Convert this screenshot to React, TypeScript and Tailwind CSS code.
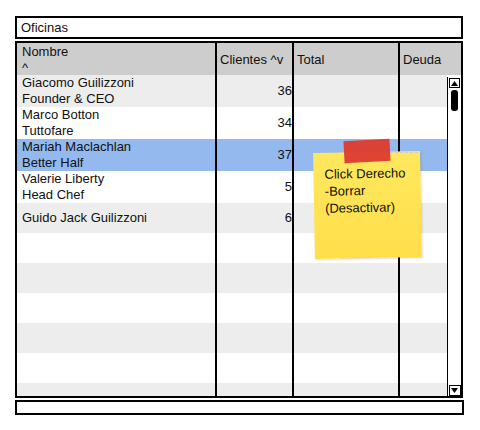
import React from "react";

type Row = { l1: string; l2?: string; n: string; h: number; bg: string };

const rows: Row[] = [
  { l1: "Giacomo Guilizzoni", l2: "Founder & CEO", n: "36", h: 32, bg: "bg-[#ededed]" },
  { l1: "Marco Botton", l2: "Tuttofare", n: "34", h: 32, bg: "bg-white" },
  { l1: "Mariah Maclachlan", l2: "Better Half", n: "37", h: 32, bg: "bg-[#93b9ee]" },
  { l1: "Valerie Liberty", l2: "Head Chef", n: "5", h: 32, bg: "bg-white" },
  { l1: "Guido Jack Guilizzoni", n: "6", h: 30, bg: "bg-[#ededed]" },
  { l1: "", n: "", h: 30, bg: "bg-white" },
  { l1: "", n: "", h: 30, bg: "bg-[#ededed]" },
  { l1: "", n: "", h: 30, bg: "bg-white" },
  { l1: "", n: "", h: 30, bg: "bg-[#ededed]" },
  { l1: "", n: "", h: 30, bg: "bg-white" },
  { l1: "", n: "", h: 30, bg: "bg-[#ededed]" },
];

export default function App() {
  return (
    <div
      className="relative w-[480px] h-[430px] bg-white text-[13px] leading-[16px] text-[#111]"
      style={{ fontFamily: '"Liberation Sans", Arial, sans-serif' }}
    >
      <div className="pl-[15px] pt-[16px] flex flex-col gap-[2px]">
        {/* Title box */}
        <div className="w-[448px] h-[23px] border-2 border-black flex items-center px-[4px]">
          Oficinas
        </div>

        {/* Grid */}
        <div className="w-[448px] h-[357px] border-2 border-black overflow-hidden flex flex-col">
          {/* Header */}
          <div className="flex h-[32px] bg-[#cdcdcd] shrink-0">
            <div className="w-[200px] border-r-2 border-black pl-[5px] pt-[1px] flex flex-col">
              <span>Nombre</span>
              <span>^</span>
            </div>
            <div className="w-[77px] border-r-2 border-black pl-[3px] flex items-center pt-[2px]">
              Clientes ^v
            </div>
            <div className="w-[106px] border-r-2 border-black pl-[3px] flex items-center pt-[2px]">
              Total
            </div>
            <div className="flex-1 pl-[3px] flex items-center pt-[2px]">Deuda</div>
          </div>

          {/* Body */}
          <div className="flex flex-1 min-h-0">
            <div className="w-[430px] flex flex-col">
              {rows.map((r, i) => (
                <div key={i} className={`flex shrink-0 ${r.bg}`} style={{ height: r.h }}>
                  <div className="w-[200px] border-r-2 border-black pl-[5px] flex flex-col justify-center">
                    <span>{r.l1}</span>
                    {r.l2 && <span>{r.l2}</span>}
                  </div>
                  <div className="w-[77px] border-r-2 border-black flex items-center justify-end pr-[0px]">
                    {r.n}
                  </div>
                  <div className="w-[106px] border-r-2 border-black" />
                  <div className="flex-1" />
                </div>
              ))}
            </div>
            {/* Scrollbar */}
            <div className="w-[14px] pt-[2px] flex flex-col">
              <div className="flex-1 border-l-[1.5px] border-black bg-white flex flex-col items-center pt-[1px] pb-[0px]">
                <div className="w-[11px] h-[10px] border border-black flex items-center justify-center">
                  <svg width="7" height="5" viewBox="0 0 7 5">
                    <polygon points="0,5 7,5 3.5,0" fill="#000" />
                  </svg>
                </div>
                <div className="mt-[2px] w-[7px] h-[21px] rounded-[3px] bg-black" />
                <div className="flex-1" />
                <div className="w-[12px] h-[11px] border border-black flex items-center justify-center">
                  <svg width="7" height="5" viewBox="0 0 7 5">
                    <polygon points="0,0 7,0 3.5,5" fill="#000" />
                  </svg>
                </div>
              </div>
            </div>
          </div>
        </div>

        {/* Bottom box */}
        <div className="w-[449px] h-[15px] border-2 border-black" />
      </div>

      {/* Sticky note */}
      <div className="absolute left-[314px] top-[152px] w-[107px] h-[106px] -rotate-1 bg-gradient-to-b from-[#ffe85e] to-[#ffde4a] shadow-[1px_1px_2px_rgba(0,0,0,0.15)] pl-[11px] pt-[13px]">
        <div className="leading-[17px] text-[13px]">
          <div>Click Derecho</div>
          <div>-Borrar</div>
          <div>(Desactivar)</div>
        </div>
      </div>
      <div className="absolute left-[390px] top-[152px] w-[28px] border-t border-dashed border-[#cfcfcf]" />
      <div className="absolute left-[344px] top-[140px] w-[46px] h-[22px] -rotate-3 bg-[#dd3a2e] opacity-95" />
    </div>
  );
}
